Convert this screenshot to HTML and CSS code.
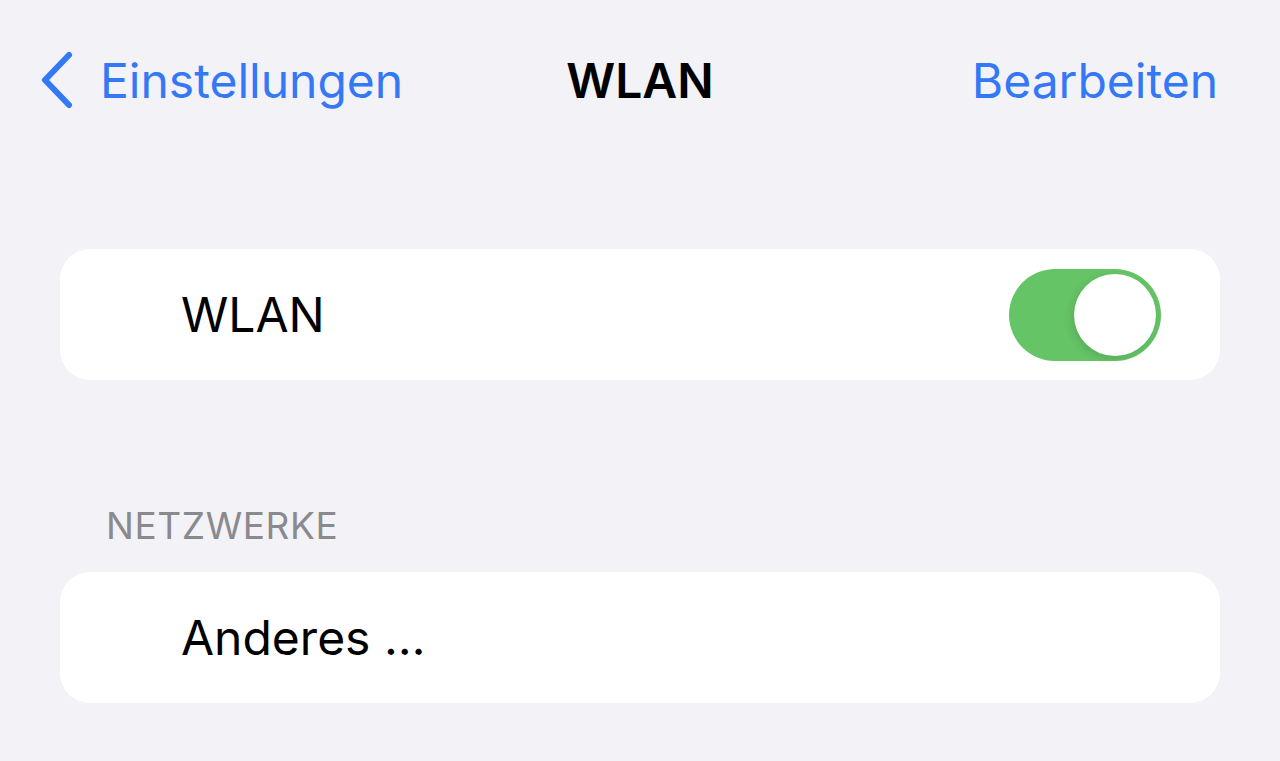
FILE: index.html
```html
<!DOCTYPE html>
<html lang="de">
<head>
    <meta charset="UTF-8">
    <meta name="viewport" content="width=device-width, initial-scale=1.0">
    <title>WLAN</title>
    <link rel="stylesheet" href="styles.css">
</head>
<body>

    <header class="navbar">
        <a class="nav-back" href="#">
            <svg class="chevron" width="34" height="58" viewBox="0 0 34 58" aria-hidden="true">
                <path d="M29 4 L5 29 L29 54" fill="none" stroke="currentColor" stroke-width="6" stroke-linecap="round" stroke-linejoin="round"/>
            </svg>
            <span>Einstellungen</span>
        </a>
        <h1 class="nav-title">WLAN</h1>
        <a class="nav-action" href="#">Bearbeiten</a>
    </header>

    <main class="content">
        <section class="group first">
            <div class="row">
                <span class="row-label">WLAN</span>
                <label class="switch">
                    <input type="checkbox" checked>
                    <span class="knob"></span>
                </label>
            </div>
        </section>

        <h2 class="group-header">Netzwerke</h2>
        <section class="group">
            <div class="row">
                <span class="row-label">Anderes …</span>
            </div>
        </section>
    </main>

</body>
</html>
```

FILE: styles.css
```css
body {
    margin: 0;
    background-color: #f2f2f7;
    font-family: Inter, "Noto Sans", sans-serif;
    color: #000;
}

a {
    text-decoration: none;
}

.navbar {
    display: grid;
    grid-template-columns: 1fr auto 1fr;
    align-items: center;
    height: 160px;
    padding: 0 62px;
}

.nav-back {
    display: flex;
    align-items: center;
    gap: 26px;
    margin-left: -22px;
    color: #3478f6;
    font-size: 48px;
    justify-self: start;
}

.chevron {
    display: block;
}

.nav-title {
    margin: 0;
    font-size: 48px;
    font-weight: 600;
    color: #000;
}

.nav-action {
    justify-self: end;
    color: #3478f6;
    font-size: 48px;
}

.content {
    padding: 0 60px;
}

.group {
    background-color: #fff;
    border-radius: 30px;
}

.group.first {
    margin-top: 89px;
    margin-bottom: 124px;
}

.row {
    display: flex;
    align-items: center;
    justify-content: space-between;
    height: 131px;
    padding: 0 59px 0 121px;
}

.row-label {
    font-size: 48px;
}

.group-header {
    margin: 0 0 24px 0;
    padding-left: 46px;
    font-size: 37px;
    font-weight: 400;
    letter-spacing: 0.6px;
    text-transform: uppercase;
    color: #8a8a8e;
    line-height: 1.2;
}

.switch {
    position: relative;
    display: block;
    width: 152px;
    height: 92px;
    border-radius: 46px;
    background-color: #65c466;
}

.switch input {
    display: none;
}

.knob {
    position: absolute;
    top: 5px;
    right: 5px;
    width: 82px;
    height: 82px;
    border-radius: 50%;
    background-color: #fff;
    box-shadow: -2px 3px 8px rgba(0, 0, 0, 0.12);
}
```
